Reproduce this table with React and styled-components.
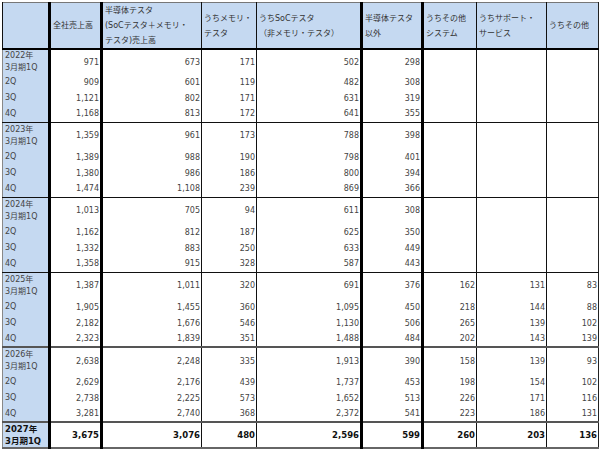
import styled, { createGlobalStyle } from "styled-components";

const GlobalStyle = createGlobalStyle`
  body {
    margin: 0;
    background: #ffffff;
  }
`;

const widths = [47, 52, 100, 55, 105, 61, 54, 70, 52];
const thickLeft = [false, true, true, false, false, true, true, false, false];

const headers = [
  [],
  ["全社売上高"],
  ["半導体テスタ", "(SoCテスタ＋メモリ・", "テスタ)売上高"],
  ["うちメモリ・", "テスタ"],
  ["うちSoCテスタ", "（非メモリ・テスタ）"],
  ["半導体テスタ", "以外"],
  ["うちその他", "システム"],
  ["うちサポート・", "サービス"],
  ["うちその他"],
];

const groups = [
  {
    year: "2022年",
    firstHeight: 25,
    rows: [
      ["971", "673", "171", "502", "298", "", "", ""],
      ["909", "601", "119", "482", "308", "", "", ""],
      ["1,121", "802", "171", "631", "319", "", "", ""],
      ["1,168", "813", "172", "641", "355", "", "", ""],
    ],
  },
  {
    year: "2023年",
    rows: [
      ["1,359", "961", "173", "788", "398", "", "", ""],
      ["1,389", "988", "190", "798", "401", "", "", ""],
      ["1,380", "986", "186", "800", "394", "", "", ""],
      ["1,474", "1,108", "239", "869", "366", "", "", ""],
    ],
  },
  {
    year: "2024年",
    rows: [
      ["1,013", "705", "94", "611", "308", "", "", ""],
      ["1,162", "812", "187", "625", "350", "", "", ""],
      ["1,332", "883", "250", "633", "449", "", "", ""],
      ["1,358", "915", "328", "587", "443", "", "", ""],
    ],
  },
  {
    year: "2025年",
    rows: [
      ["1,387", "1,011", "320", "691", "376", "162", "131", "83"],
      ["1,905", "1,455", "360", "1,095", "450", "218", "144", "88"],
      ["2,182", "1,676", "546", "1,130", "506", "265", "139", "102"],
      ["2,323", "1,839", "351", "1,488", "484", "202", "143", "139"],
    ],
  },
  {
    year: "2026年",
    heavy: true,
    rows: [
      ["2,638", "2,248", "335", "1,913", "390", "158", "139", "93"],
      ["2,629", "2,176", "439", "1,737", "453", "198", "154", "102"],
      ["2,738", "2,225", "573", "1,652", "513", "226", "171", "116"],
      ["3,281", "2,740", "368", "2,372", "541", "223", "186", "131"],
    ],
  },
];

const lastRow = ["3,675", "3,076", "480", "2,596", "599", "260", "203", "136"];

const App = () => {
  return (
    <>
      <GlobalStyle />
      <Table>
        <colgroup>
          {widths.map((w, i) => (
            <Col key={i} $w={w} />
          ))}
        </colgroup>
        <thead>
          <HeadRow>
            {headers.map((lines, i) => (
              <HeadCell key={i} $thick={thickLeft[i]}>
                {lines.map((l, j) => (
                  <HeadLine key={j}>{l}</HeadLine>
                ))}
              </HeadCell>
            ))}
          </HeadRow>
        </thead>
        <tbody>
          {groups.map((g) =>
            g.rows.map((r, ri) => (
              <Row
                key={g.year + ri}
                $first={ri === 0}
                $h={ri === 0 ? g.firstHeight || 27 : 16}
                $heavy={ri === 0 && g.heavy}
              >
                <LabelCell>
                  {ri === 0 ? (
                    <>
                      {g.year}
                      <br />
                      3月期1Q
                    </>
                  ) : (
                    `${ri + 1}Q`
                  )}
                </LabelCell>
                {r.map((v, ci) => (
                  <NumCell key={ci} $thick={thickLeft[ci + 1]}>
                    {v}
                  </NumCell>
                ))}
              </Row>
            ))
          )}
          <Row $first $heavy $bold $h={26}>
            <LabelCell>
              2027年
              <br />
              3月期1Q
            </LabelCell>
            {lastRow.map((v, ci) => (
              <NumCell key={ci} $thick={thickLeft[ci + 1]}>
                {v}
              </NumCell>
            ))}
          </Row>
        </tbody>
      </Table>
    </>
  );
};

const Table = styled.table`
  border-collapse: collapse;
  table-layout: fixed;
  width: 596px;
  margin: 2px 0 0 2px;
  font-family: "DejaVu Sans", "Noto Sans CJK JP", sans-serif;
  font-size: 8px;
  color: #444;
  border-top: 1px solid #777;
  border-left: 1px solid #888;
  border-right: 1px solid #222;
  border-bottom: 2px solid #666;
`;

const Col = styled.col`
  width: ${(p) => p.$w}px;
`;

const HeadRow = styled.tr`
  height: 38px;
`;

const HeadCell = styled.th`
  background: #c5d9f1;
  font-weight: normal;
  text-align: left;
  vertical-align: middle;
  padding: 0 2px;
  line-height: 15px;
  color: #333;
  white-space: nowrap;
  overflow: hidden;
  border-left: ${(p) => (p.$thick ? "3px solid #000" : "1px solid #111")};
  border-bottom: 2px solid #000;
`;

const HeadLine = styled.div``;

const Row = styled.tr`
  height: ${(p) => p.$h}px;
  font-weight: ${(p) => (p.$bold ? "bold" : "normal")};
  color: ${(p) => (p.$bold ? "#111" : "inherit")};
  font-size: ${(p) => (p.$bold ? "8.5px" : "8px")};

  & > td {
    border-top: ${(p) =>
      p.$first ? (p.$heavy ? "2px solid #555" : "1px solid #111") : "none"};
  }
`;

const LabelCell = styled.td`
  background: #c5d9f1;
  text-align: left;
  vertical-align: middle;
  padding: 0 0 0 2px;
  line-height: 12px;
  white-space: nowrap;
`;

const NumCell = styled.td`
  text-align: right;
  vertical-align: middle;
  padding: 0 1px 0 0;
  white-space: nowrap;
  border-left: ${(p) => (p.$thick ? "3px solid #000" : "1px solid #111")};
`;

export default App;
